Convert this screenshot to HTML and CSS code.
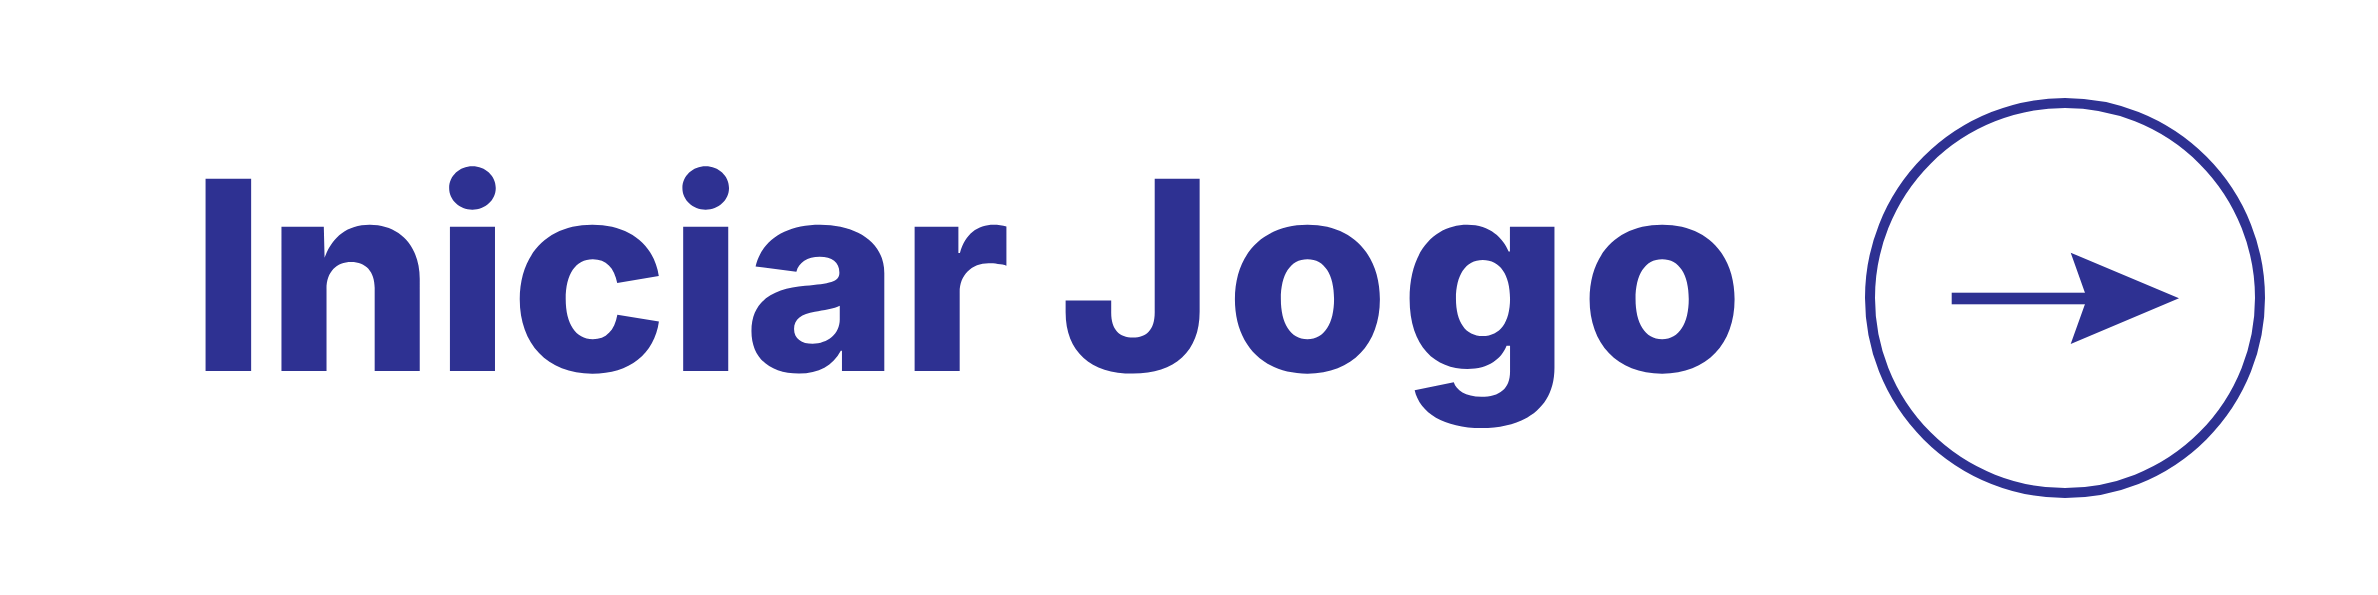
FILE: index.html
```html
<!DOCTYPE html>
<html lang="pt">
<head>
<meta charset="utf-8">
<title>Iniciar Jogo</title>
<link rel="stylesheet" href="styles.css">
</head>
<body>
<div class="start">
  <span class="label"><span class="word-first">Iniciar</span> <span class="word-second">Jogo</span></span>
  <svg class="arrow-circle" width="400" height="400" viewBox="0 0 400 400" aria-hidden="true">
    <circle cx="200" cy="200" r="195" fill="none" stroke="#2e3192" stroke-width="10"/>
    <rect x="86.7" y="194.7" width="140" height="11.6" fill="#2e3192"/>
    <polygon points="205.7,154.7 314,200.3 205.7,246 222,200.5" fill="#2e3192"/>
  </svg>
</div>
</body>
</html>
```

FILE: styles.css
```css
html, body {
  margin: 0;
  padding: 0;
  background: #ffffff;
}

.start {
  display: flex;
  align-items: center;
  height: 595px;
  width: 2378px;
  box-sizing: border-box;
  padding-left: 190.6px;
}

.label {
  align-self: flex-start;
  margin-top: 142.8px;
  font-family: Inter, "Liberation Sans", sans-serif;
  font-weight: 800;
  font-size: 264.4px;
  line-height: 1;
  color: #2e3192;
  white-space: nowrap;
  word-spacing: -10.5px;
}

.word-first {
  letter-spacing: 0.5px;
}

.word-second {
  letter-spacing: 11px;
}

.arrow-circle {
  display: block;
  margin-left: auto;
  margin-right: 113px;
  flex: none;
}
```
